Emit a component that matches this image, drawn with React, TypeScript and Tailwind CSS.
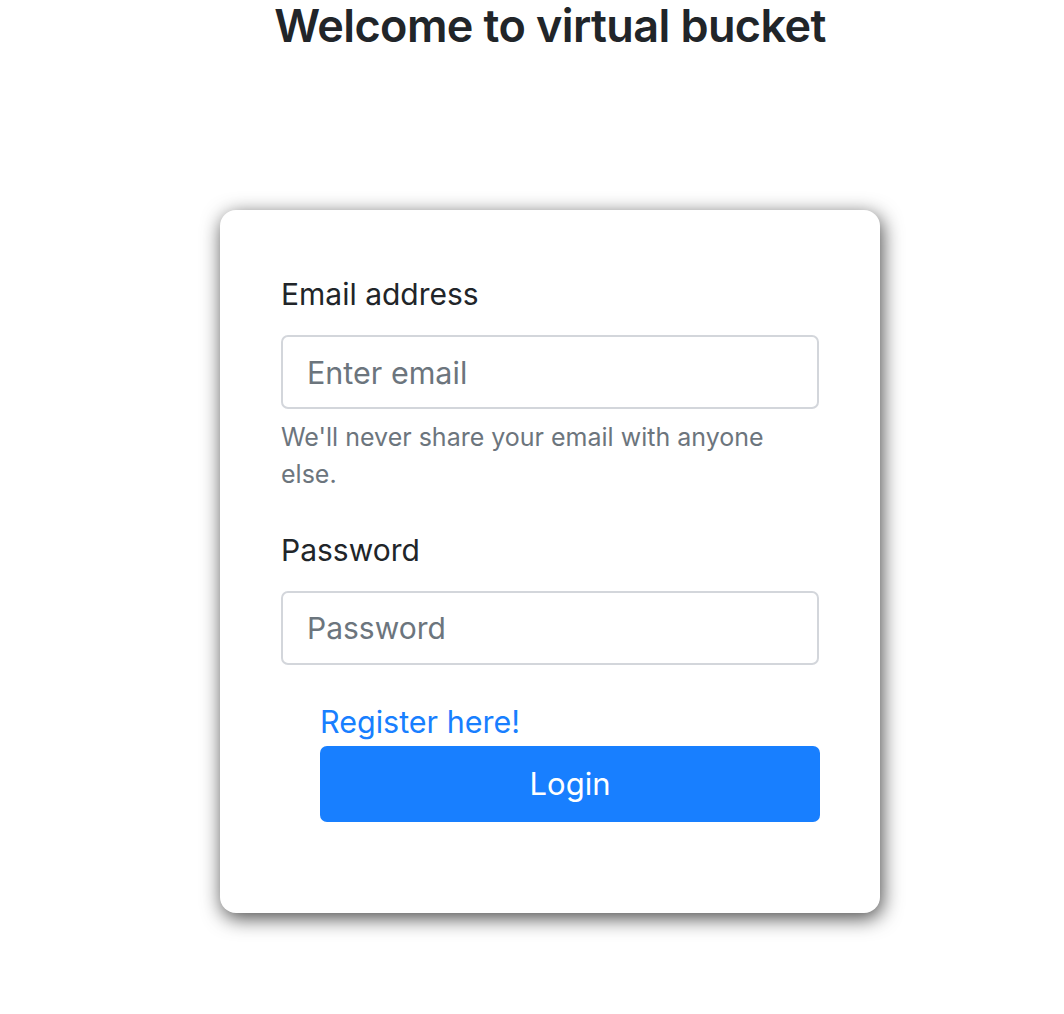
export default function App() {
  return (
    <div
      className="min-h-screen bg-white flex flex-col items-center pl-[36px] text-[#212529]"
      style={{ fontFamily: "Inter, 'Noto Sans', sans-serif" }}
    >
      <h1 className="pt-[1px] text-[45px] leading-[50px] font-semibold tracking-[-0.6px]">Welcome to virtual bucket</h1>

      <div className="mt-[159px] w-[660px] rounded-[16px] bg-white shadow-[2px_5px_20px_rgba(0,0,0,0.72)] px-[61px] pt-[63px] pb-[91px]">
        <form className="flex flex-col" onSubmit={(e) => e.preventDefault()}>
          <label className="text-[30px] leading-[42px]">Email address</label>
          <input
            type="email"
            placeholder="Enter email"
            className="mt-[20px] h-[74px] w-full rounded-[7px] border-2 border-[#d3d6db] px-[24px] text-[30.5px] outline-none placeholder:text-[#6c757d]"
          />
          <p className="mt-[10px] text-[25px] leading-[37px] text-[#6c757d]">
            We'll never share your email with anyone else.
          </p>

          <label className="mt-[36px] text-[30px] leading-[42px]">Password</label>
          <input
            type="password"
            placeholder="Password"
            className="mt-[20px] h-[74px] w-full rounded-[7px] border-2 border-[#d3d6db] px-[24px] text-[30px] outline-none placeholder:text-[#6c757d]"
          />

          <div className="ml-[39px] w-[500px] flex flex-col">
            <a href="#" className="mt-[36px] text-[30.5px] leading-[42px] text-[#187fff]">
              Register here!
            </a>
            <button
              type="submit"
              className="mt-[3px] h-[76px] w-full rounded-[7px] bg-[#187fff] text-white text-[31px]"
            >
              Login
            </button>
          </div>
        </form>
      </div>
    </div>
  );
}
